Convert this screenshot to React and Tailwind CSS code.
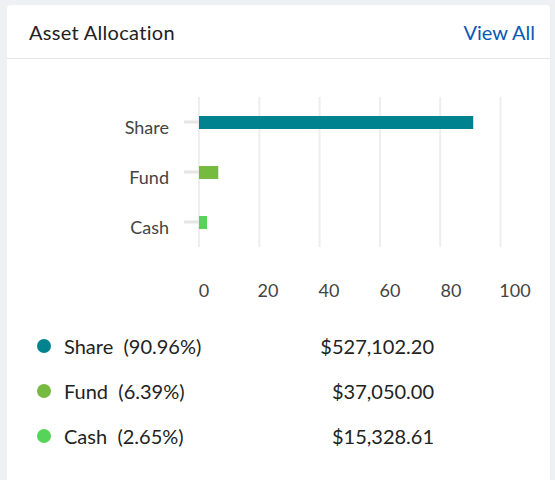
export default function App() {
  const ticks = [0, 20, 40, 60, 80, 100];
  const tx = [204, 268, 329, 390, 451, 515];
  const bars = [
    { label: "Share", v: 90.96, c: "#00838f", y: 116 },
    { label: "Fund", v: 6.39, c: "#76bb40", y: 166 },
    { label: "Cash", v: 2.65, c: "#56d45a", y: 216 },
  ];
  const legend = [
    { n: "Share", p: "(90.96%)", a: "$527,102.20", c: "#00838f" },
    { n: "Fund", p: "(6.39%)", a: "$37,050.00", c: "#76bb40" },
    { n: "Cash", p: "(2.65%)", a: "$15,328.61", c: "#56d45a" },
  ];
  return (
    <div className="w-[555px] h-[480px] bg-[#eef1f4] pt-[5px] pl-[7px] pr-[5px]" style={{ fontFamily: "Lato, 'Open Sans', sans-serif" }}>
      <div className="bg-white h-[475px] rounded-t-[4px]">
        <div className="h-[54px] flex items-center justify-between pl-[22px] pr-[15px] border-b border-[#e3e6ea]">
          <span className="text-[20px] text-[#222] tracking-[0.3px]">Asset Allocation</span>
          <span className="text-[20px] text-[#0b57b5]">View All</span>
        </div>
        <svg width="543" height="250" className="block">
          {ticks.map((t, i) => (
            <g key={t}>
              <line x1={192 + i * 60.3} x2={192 + i * 60.3} y1={38} y2={188} stroke="#eeeeee" strokeWidth="2" />
              <text x={tx[i] - 7} y={238} textAnchor="middle" fontSize="18" fill="#444">{t}</text>
            </g>
          ))}
          {bars.map((b) => (
            <g key={b.label}>
              <line x1={177} x2={192} y1={b.y - 53} y2={b.y - 53} stroke="#e5e5e5" strokeWidth="3" />
              <rect x={192} y={b.y - 59} width={b.v * 3.015} height={13} fill={b.c} />
              <text x={162} y={b.y - 41} textAnchor="end" fontSize="18" fill="#444">{b.label}</text>
            </g>
          ))}
        </svg>
        <div className="flex flex-col pl-[30px] text-[20px] text-[#222] mt-[14px]">
          {legend.map((l) => (
            <div key={l.n} className="h-[45px] flex items-center">
              <span className="w-[14px] h-[14px] rounded-full mr-[13px]" style={{ background: l.c }} />
              <span className="w-[225px]">{l.n}&nbsp; {l.p}</span>
              <span className="w-[145px] text-right">{l.a}</span>
            </div>
          ))}
        </div>
      </div>
    </div>
  );
}
